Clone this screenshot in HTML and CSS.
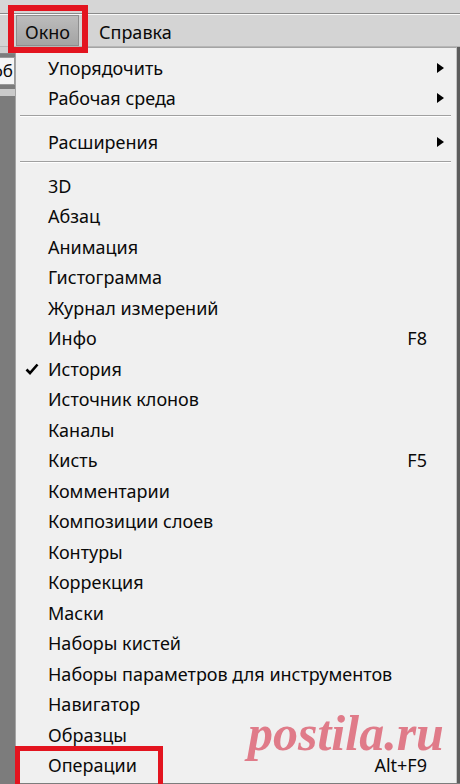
FILE: index.html
```html
<!DOCTYPE html>
<html lang="ru">
<head>
    <meta charset="UTF-8">
    <title>Окно</title>
    <link rel="stylesheet" href="styles.css">
</head>
<body>
    <div class="top-strip"></div>
    <div class="menubar">
        <span class="menubar-item active">Окно</span>
        <span class="menubar-item">Справка</span>
    </div>

    <div class="workspace">
        <div class="side-panel">
            <div class="side-top"></div>
            <div class="side-tab">об</div>
            <div class="side-strip"></div>
        </div>

        <div class="dropdown">
            <div class="row"><span class="check"></span><span class="label">Упорядочить</span><span class="key"></span><span class="sub"><i class="arrow"></i></span></div>
            <div class="row"><span class="check"></span><span class="label">Рабочая среда</span><span class="key"></span><span class="sub"><i class="arrow"></i></span></div>
            <div class="separator first"></div>
            <div class="row"><span class="check"></span><span class="label">Расширения</span><span class="key"></span><span class="sub"><i class="arrow"></i></span></div>
            <div class="separator second"></div>
            <div class="row"><span class="check"></span><span class="label">3D</span></div>
            <div class="row"><span class="check"></span><span class="label">Абзац</span></div>
            <div class="row"><span class="check"></span><span class="label">Анимация</span></div>
            <div class="row"><span class="check"></span><span class="label">Гистограмма</span></div>
            <div class="row"><span class="check"></span><span class="label">Журнал измерений</span></div>
            <div class="row"><span class="check"></span><span class="label">Инфо</span><span class="key">F8</span><span class="sub"></span></div>
            <div class="row">
                <span class="check">
                    <svg width="14" height="12" viewBox="0 0 14 12"><path d="M1.5 6.5 L5 10 L12.5 1.5" fill="none" stroke="#000" stroke-width="2.6"/></svg>
                </span>
                <span class="label">История</span>
            </div>
            <div class="row"><span class="check"></span><span class="label">Источник клонов</span></div>
            <div class="row"><span class="check"></span><span class="label">Каналы</span></div>
            <div class="row"><span class="check"></span><span class="label">Кисть</span><span class="key">F5</span><span class="sub"></span></div>
            <div class="row"><span class="check"></span><span class="label">Комментарии</span></div>
            <div class="row"><span class="check"></span><span class="label">Композиции слоев</span></div>
            <div class="row"><span class="check"></span><span class="label">Контуры</span></div>
            <div class="row"><span class="check"></span><span class="label">Коррекция</span></div>
            <div class="row"><span class="check"></span><span class="label">Маски</span></div>
            <div class="row"><span class="check"></span><span class="label">Наборы кистей</span></div>
            <div class="row"><span class="check"></span><span class="label">Наборы параметров для инструментов</span></div>
            <div class="row"><span class="check"></span><span class="label">Навигатор</span></div>
            <div class="row"><span class="check"></span><span class="label">Образцы</span></div>
            <div class="row"><span class="check"></span><span class="label">Операции</span><span class="key">Alt+F9</span><span class="sub"></span></div>
        </div>

        <div class="right-edge"></div>
    </div>

    <!-- red marks drawn over the screenshot -->
    <div class="mark mark-window"></div>
    <div class="mark mark-actions"></div>
    <div class="watermark">postila.ru</div>
</body>
</html>
```

FILE: styles.css
```css
body {
    margin: 0;
    width: 460px;
    height: 784px;
    overflow: hidden;
    position: relative;
    background-color: #7c7c7c;
    font-family: "Noto Sans", "Open Sans", sans-serif;
    font-size: 18px;
    color: #0a0a0a;
}
.top-strip {
    height: 13px;
    background-color: #d6d6d6;
    border-bottom: 1px solid #8a8a8a;
}
.menubar {
    display: flex;
    gap: 11px;
    height: 31px;
    padding-left: 16px;
    background-color: #d4d4d4;
    border-top: 1px solid #fafafa;
    border-bottom: 1px solid #b6b6b6;
}
.menubar-item {
    display: flex;
    align-items: center;
    padding: 2px 9px 0;
}
.menubar-item.active {
    background: linear-gradient(#bdbdbd, #a3a3a3);
    box-shadow: inset 0 0 0 1px #8e8e8e;
}
.workspace {
    display: flex;
    height: 736px;
}
.side-panel {
    width: 15px;
    flex-shrink: 0;
}
.side-top {
    height: 6px;
    background-color: #cfcfcf;
    border-bottom: 1px solid #888;
}
.side-tab {
    height: 26px;
    margin-top: 3px;
    background-color: #f5f5f5;
    border: 1px solid #9a9a9a;
    border-left: none;
    overflow: hidden;
    direction: rtl;
    font-size: 17px;
    line-height: 26px;
    padding-right: 1px;
}
.side-strip {
    height: 7px;
    margin-top: 4px;
    background-color: #cacaca;
}
.dropdown {
    flex: 1;
    background-color: #f0f0f0;
    border-top: 1px solid #a4a4a4;
    border-left: 1px solid #a4a4a4;
    border-right: 1px solid #c4c4c4;
    padding-top: 5px;
}
.right-edge {
    width: 3px;
    background-color: #5c5c5c;
}
.row {
    display: flex;
    align-items: center;
    height: 30.5px;
    padding-left: 8px;
    padding-right: 12px;
}
.row:nth-child(-n+2) {
    height: 30px;
}
.check {
    width: 23px;
    flex-shrink: 0;
    display: flex;
    align-items: center;
    padding-left: 1px;
}
.check svg {
    display: block;
}
.label {
    flex: 1;
}
.key {
    text-align: right;
}
.sub {
    width: 17px;
    display: flex;
    justify-content: flex-end;
}
.arrow {
    width: 0;
    height: 0;
    border-left: 7px solid #000;
    border-top: 5px solid transparent;
    border-bottom: 5px solid transparent;
}
.separator {
    height: 1px;
    margin-left: 4px;
    margin-right: 5px;
    background-color: #a0a0a0;
    border-bottom: 1px solid #ffffff;
}
.separator.first {
    margin-top: 2px;
    margin-bottom: 10px;
}
.separator.second {
    margin-top: 3px;
    margin-bottom: 8px;
}
.mark {
    position: absolute;
    border: 6px solid #e3141f;
    box-sizing: border-box;
}
.mark-window {
    left: 8px;
    top: 5px;
    width: 80px;
    height: 48px;
}
.mark-actions {
    left: 15px;
    top: 746px;
    width: 148px;
    height: 50px;
    border-width: 5px;
}
.watermark {
    position: absolute;
    left: 248px;
    top: 704px;
    font-family: "Liberation Serif", serif;
    font-style: italic;
    font-weight: bold;
    font-size: 50px;
    color: rgba(220, 96, 114, 0.82);
    pointer-events: none;
}
```
